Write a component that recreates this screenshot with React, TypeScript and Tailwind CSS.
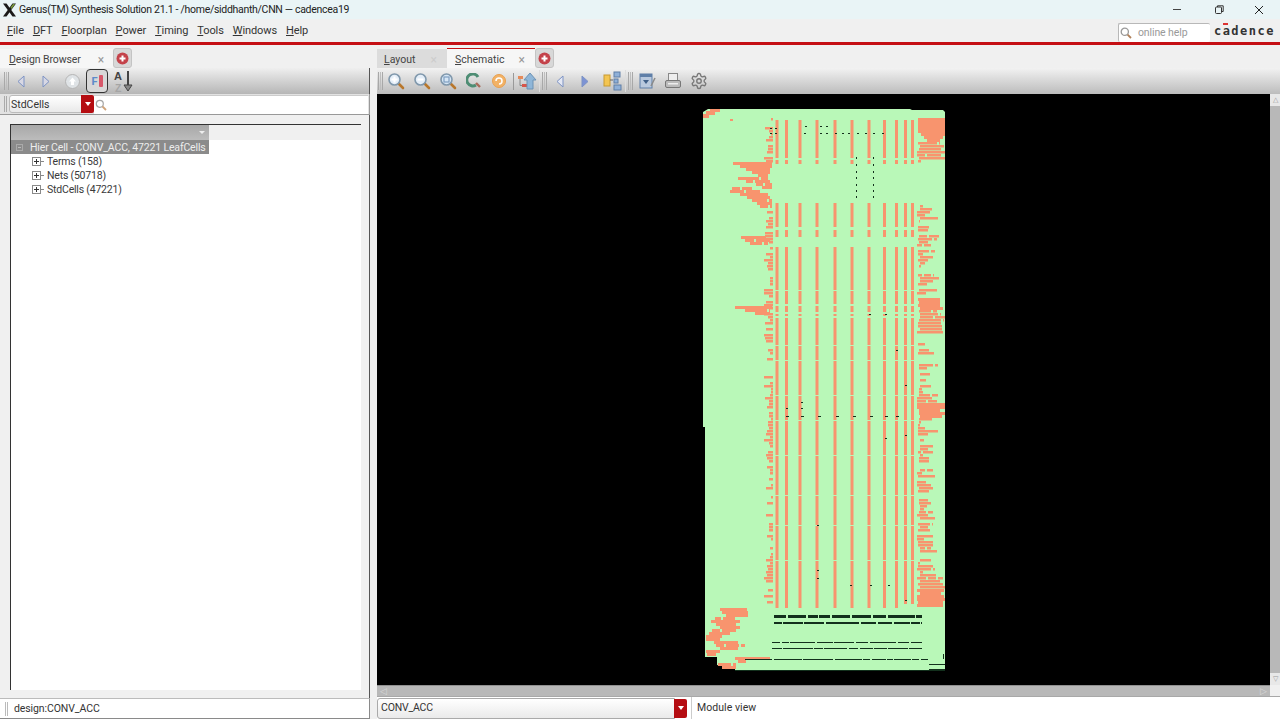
import React from "react";

function rng(seed: number) {
  let s = seed;
  return () => {
    s = (s * 1664525 + 1013904223) % 4294967296;
    return s / 4294967296;
  };
}

const STRIPES: [number, number][] = [
  [775.5, 3], [785, 3], [798.5, 3], [815.5, 3], [833.5, 3], [850.5, 3], [867.5, 3], [883, 3], [895, 3], [904, 3], [911, 3],
];
const SEGMENTS: [number, number][] = [
  [120, 158], [160, 164], [203, 227], [230, 237], [247, 290], [291, 304], [306, 312], [314, 316], [318, 345], [346, 360], [361, 395], [396, 420], [421, 455], [456, 495], [496, 525], [526, 560], [561, 608],
];
const ROW_LEFT: [number, number, number][] = [
  [162, 733, 772], [165, 740, 772], [168, 746, 770], [171, 752, 770], [174, 758, 768],
  [177, 738, 768], [180, 746, 770], [183, 756, 772], [186, 762, 772],
  [187, 732, 752], [190, 730, 760], [193, 740, 768], [196, 747, 772], [199, 752, 772], [202, 757, 772], [205, 760, 772],
  [236, 741, 766], [239, 745, 770], [242, 750, 768],
  [306, 735, 772], [309, 745, 770], [312, 755, 770],
  [608, 720, 747], [611, 722, 748], [614, 726, 748], [617, 715, 735], [620, 711, 740], [623, 716, 738], [626, 720, 740], [629, 712, 736],
  [632, 709, 730], [635, 706, 722], [638, 706, 720], [641, 714, 738], [644, 716, 745], [647, 720, 738], [650, 706, 720], [653, 707, 718], [657, 735, 770], [660, 738, 746], [663, 718, 736], [666, 722, 736],
];

function buildChip() {
  const r = rng(71);
  const salmon: string[] = [];
  const dark: string[] = [];
  const rect = (x: number, y: number, w: number, h: number) => `M${x} ${y}h${w}v${h}h${-w}z`;
  STRIPES.forEach(([x, w], i) => {
    SEGMENTS.forEach(([a, b]) => {
      if (i >= 9 && b > 600) salmon.push(rect(x, a, w, 604 - a));
      else salmon.push(rect(x, a, w, b - a));
    });
  });
  ROW_LEFT.forEach(([y, a, b]) => {
    let x = a;
    while (x < b) {
      const w = 5 + Math.floor(r() * 12);
      salmon.push(rect(x, y, Math.min(w, b - x), 3));
      x += w + (r() < 0.25 ? 2 : 0);
    }
  });
  for (let y = 118; y < 606; y += 3) {
    if (y > 160 && y < 203) continue;
    if (r() < 0.66) {
      const start = 764 + Math.floor(r() * 8);
      salmon.push(rect(start, y, 773 - start, 2.5));
    }
    const solid = y < 141;
    const block = (y > 295 && y < 310) || (y > 400 && y < 418) || (y > 588 && y < 607);
    const dense = y < 160 || block || (y > 310 && y < 333) || (y > 575 && y < 607);
    if (dense || r() < 0.74) {
      const end = dense ? 945 - Math.floor(r() * (y < 135 ? 1 : 6)) : 920 + Math.floor(r() * 20);
      let x = solid ? 918 + Math.max(0, y - 130) : 917 + Math.floor(r() * 4);
      while (x < end) {
        const w = dense ? 8 + Math.floor(r() * 12) : 3 + Math.floor(r() * 12);
        salmon.push(rect(x, y, Math.min(w, end - x), solid || block ? 3 : 2.5));
        x += w + (solid || block ? 0 : r() < 0.4 ? 2 : 0);
      }
    }
  }
  salmon.push(rect(703, 114, 6, 4), rect(706, 111, 9, 4), rect(710, 109, 10, 3), rect(730, 119, 3, 2));
  ([[615, 3, 774, 922], [622, 2, 774, 922], [642, 1, 772, 922], [648, 1, 772, 922], [659, 1, 745, 928]] as number[][]).forEach(([y, h, s, end]) => {
    let x = s;
    while (x < end) {
      const w = 6 + Math.floor(r() * 28);
      dark.push(rect(x, y, Math.min(w, end - x), h));
      x += w + 1 + Math.floor(r() * 2);
    }
  });
  dark.push(rect(929, 664, 16, 1), rect(929, 669, 16, 1), rect(735, 670, 210, 1), rect(943, 654, 1, 5));
  [[128, 770], [128, 775], [133, 770], [133, 775], [126, 805], [126, 820], [126, 826], [133, 804], [133, 820], [133, 826], [133, 835], [133, 842], [133, 848], [133, 857], [133, 865], [133, 873], [133, 882]].forEach(([y, x]) =>
    dark.push(rect(x, y, 2, 1)),
  );
  [157, 164, 171, 177, 184, 190, 196].forEach((y) => {
    dark.push(rect(856, y, 1, 2), rect(873, y, 1, 2));
  });
  [786, 801, 818, 836, 853, 870, 885, 896].forEach((x) => dark.push(rect(x, 416, 3, 1)));
  [[801, 402], [801, 408], [786, 408], [869, 314], [885, 314], [896, 350], [905, 385], [905, 435], [885, 438], [817, 525], [817, 570], [817, 578], [850, 585], [870, 585], [888, 585], [905, 600]].forEach(([x, y]) =>
    dark.push(rect(x, y, 2, 1)),
  );
  return { salmon: salmon.join(""), dark: dark.join("") };
}

const chip = buildChip();

function Chip() {
  return (
    <svg viewBox="377 94 893 591" className="block w-full h-full blur-[0.4px]">
      <path d="M703 112 L708 109 H910 L912 110 H943 L945 112 V671 H735 V668 L717 665 V657 H705 V427 H703 Z" fill="#b9f8b8" />
      <path d={chip.salmon} fill="#f8946e" />
      <path d={chip.dark} fill="#12301c" />
    </svg>
  );
}

const font = "font-['Roboto',sans-serif]";

function Grip() {
  return (
    <div className="flex gap-[1px] h-[18px] shrink-0">
      <span className="w-[1px] bg-[#a8a8a8]" />
      <span className="w-[1px] bg-[#bdbdbd]" />
      <span className="w-[1px] bg-[#a8a8a8]" />
    </div>
  );
}

function Mag({ kind }: { kind: "plus" | "minus" | "fit" }) {
  return (
    <svg width="18" height="18" viewBox="0 0 18 18" className="shrink-0">
      <line x1="11" y1="11" x2="16" y2="16" stroke="#b8772c" strokeWidth="2.6" strokeLinecap="round" />
      <circle cx="7.5" cy="7.5" r="5.5" fill={kind === "fit" ? "#d6e6f5" : "#e4eef8"} stroke="#8098ac" strokeWidth="1.6" />
      {kind !== "fit" && <rect x="4.5" y="6.5" width="6" height="2" fill="#fff" />}
      {kind === "plus" && <rect x="6.5" y="4.5" width="2" height="6" fill="#fff" />}
      {kind === "fit" && <rect x="5" y="5" width="5" height="5" fill="none" stroke="#7f9fc0" strokeWidth="1.2" />}
    </svg>
  );
}

function Tri({ dir, color, size = 10 }: { dir: "l" | "r"; color: string; size?: number }) {
  return (
    <svg width={size} height={size + 3} viewBox="0 0 10 13" className="shrink-0">
      <path d={dir === "l" ? "M8 1 L2 6.5 L8 12 Z" : "M2 1 L8 6.5 L2 12 Z"} fill={color} stroke="#7d93c4" strokeWidth="1" />
    </svg>
  );
}

function PlusBox() {
  return (
    <svg width="9" height="9" viewBox="0 0 9 9" className="shrink-0">
      <rect x="0.5" y="0.5" width="8" height="8" fill="#fff" stroke="#8a8a8a" />
      <path d="M2 4.5H7M4.5 2V7" stroke="#333" />
    </svg>
  );
}

function AddTab() {
  return (
    <div className="w-[19px] h-[20px] rounded-[3px] bg-[#d8d8d8] border border-[#c4c4c4] flex items-center justify-center mb-[1px]">
      <svg width="13" height="13" viewBox="0 0 13 13">
        <circle cx="6.5" cy="6.5" r="6" fill="#c4424a" />
        <path d="M3.5 6.5H9.5M6.5 3.5V9.5" stroke="#fff" strokeWidth="2" />
      </svg>
    </div>
  );
}

function RedDrop({ h }: { h: string }) {
  return (
    <div className={`w-[13px] ${h} bg-[#b50d12] rounded-r-[2px] flex items-center justify-center shrink-0`}>
      <span className="w-0 h-0 border-l-[3px] border-r-[3px] border-t-[4px] border-l-transparent border-r-transparent border-t-white" />
    </div>
  );
}

function TreeItem({ label }: { label: string }) {
  return (
    <div className="flex items-center h-[14px] pl-[21px] gap-[4px] text-[10.5px] tracking-[-0.2px] text-[#3a3a3a] leading-none">
      <div className="flex items-center">
        <PlusBox />
        <span className="w-[2px] border-t border-dotted border-[#888]" />
      </div>
      <span className="pt-[2px]">{label}</span>
    </div>
  );
}

const U = ({ children }: { children: string }) => <span className="underline">{children}</span>;

export default function App() {
  return (
    <div className={`w-[1280px] h-[719px] overflow-hidden flex flex-col bg-[#f0f0f0] text-[#333] ${font}`}>
      {/* Title bar */}
      <div className="h-[19px] bg-[#e9f4f6] flex items-center shrink-0">
        <svg width="15" height="14" viewBox="0 0 15 14" className="ml-[2px] mr-[2px]">
          <path d="M1 0.5 H4.5 L14 13.5 H10.5 Z" fill="#1a1a1a" />
          <path d="M14 0.5 H10.5 L1 13.5 H4.5 Z" fill="#1a1a1a" />
          <path d="M13 1 L11 1 L8.5 4.5 L9.5 6 Z" fill="#7b9a3a" />
        </svg>
        <span className="text-[10.5px] tracking-[-0.3px] pt-[1px] text-[#222] whitespace-nowrap">Genus(TM) Synthesis Solution 21.1 - /home/siddhanth/CNN — cadencea19</span>
        <div className="ml-auto flex items-center text-[#222]">
          <span className="w-[8px] h-[1px] bg-[#444] mr-[34px]" />
          <svg width="9" height="9" viewBox="0 0 9 9" className="mr-[30px]">
            <rect x="0.5" y="2" width="6" height="6.5" rx="1" fill="none" stroke="#333" />
            <path d="M2.5 2 V0.8 H8.2 V6.5 H6.5" fill="none" stroke="#333" />
          </svg>
          <svg width="10" height="10" viewBox="0 0 10 10" className="mr-[16px]">
            <path d="M1 1 L9 9 M9 1 L1 9" stroke="#222" strokeWidth="1" />
          </svg>
        </div>
      </div>
      {/* Menu bar */}
      <div className="h-[23px] flex items-center shrink-0 pl-[7px] text-[11px] tracking-[-0.1px] text-[#333]">
        <div className="flex gap-[9px] pt-[2px]">
          <span><U>F</U>ile</span>
          <span><U>D</U>FT</span>
          <span><U>F</U>loorplan</span>
          <span><U>P</U>ower</span>
          <span><U>T</U>iming</span>
          <span><U>T</U>ools</span>
          <span><U>W</U>indows</span>
          <span><U>H</U>elp</span>
        </div>
        <div className="ml-auto flex items-center h-full">
          <div className="w-[92px] h-[19px] mt-[3px] bg-white border-t border-l border-[#b8b8b8] rounded-[2px] flex items-center pl-[1px]">
            <svg width="12" height="12" viewBox="0 0 12 12" className="mr-[6px]">
              <circle cx="4.8" cy="4.8" r="3.6" fill="none" stroke="#9a9a9a" strokeWidth="1.3" />
              <line x1="7.6" y1="7.6" x2="11" y2="11" stroke="#b0805a" strokeWidth="1.8" />
            </svg>
            <span className="text-[10.5px] text-[#9a9a9a]">online help</span>
          </div>
          <span className="ml-[4px] mr-[5px] text-[12px] font-bold text-[#333] tracking-[1.5px] font-['DejaVu_Sans_Mono',monospace] relative">
            cadence
            <span className="absolute left-[9px] top-[1px] w-[5px] h-[2px] bg-[#d33]" />
          </span>
        </div>
      </div>
      <div className="h-[3px] bg-[#c50f14] shrink-0" />
      {/* Body */}
      <div className="flex-1 flex min-h-0">
        {/* Left pane */}
        <div className="w-[373px] shrink-0 flex flex-col pt-[3px] border-r-[3px] border-[#f0f0f0]">
          <div className="h-[21px] flex items-end shrink-0">
            <div className="w-[113px] h-[20px] bg-[#f6f6f6] flex items-center pl-[9px] pt-[1px] text-[10.5px] tracking-[-0.1px] text-[#444]">
              <span><U>D</U>esign Browser</span>
              <span className="ml-auto mr-[9px] text-[#999] text-[12px] leading-none">×</span>
            </div>
            <AddTab />
          </div>
          <div className="w-[370px] h-[26px] mt-[-1px] border-r border-[#555] bg-gradient-to-b from-[#efefef] to-[#b6b6b6] flex items-center pl-[4px] shrink-0">
            <Grip />
            <div className="ml-[7px] w-[8px]"><Tri dir="l" color="#d8d8e4" /></div>
            <div className="ml-[17px] w-[8px]"><Tri dir="r" color="#d8d8e4" /></div>
            <svg width="15" height="15" viewBox="0 0 15 15" className="ml-[16px]">
              <circle cx="7.5" cy="7.5" r="7" fill="#dfe3e6" stroke="#b5b5b5" />
              <path d="M7.5 3.5 L11 7.5 H9 V11 H6 V7.5 H4 Z" fill="#fff" />
            </svg>
            <div className="ml-[6px] w-[22px] h-[24px] border border-[#333] rounded-[4px] bg-[#d8d8d8] flex items-center justify-center gap-[1px]">
              <span className="text-[11px] font-bold text-[#5d8bc9] leading-none">F</span>
              <span className="w-[4px] h-[12px] bg-[#d8586a] rounded-[1px]" />
            </div>
            <svg width="22" height="23" viewBox="0 0 22 23" className="ml-[5px]">
              <path d="M15 1 V18" stroke="#333" strokeWidth="1.8" />
              <path d="M11 15 L15 21 L19 15 Z" fill="#888" stroke="#444" />
              <text x="1" y="10" fontSize="11" fontWeight="700" fill="#444" fontFamily="Liberation Sans">A</text>
              <text x="2" y="22" fontSize="10.5" fontWeight="700" fill="#a5a5a5" fontFamily="Liberation Sans">Z</text>
            </svg>
          </div>
          <div className="w-[370px] h-[21px] border-r border-[#999] border-b bg-[#e2e2e2] flex items-center pl-[4px] shrink-0">
            <div className="flex w-[5px] gap-[1px] h-[16px]">
              <span className="w-[1px] bg-[#aaa]" />
              <span className="w-[1px] bg-[#aaa]" />
            </div>
            <div className="w-[74px] h-[18px] bg-gradient-to-b from-[#fff] to-[#e9e9e9] border border-[#bbb] rounded-l-[3px] flex items-center text-[10.5px] pt-[1px] text-[#333] pl-[1px] mr-[-2px]">
              StdCells
            </div>
            <RedDrop h="h-[18px]" />
            <div className="flex-1 h-[19px] bg-white border-t border-[#ccc] flex items-center mr-[1px]">
              <svg width="12" height="12" viewBox="0 0 12 12" className="ml-[1px]">
                <circle cx="4.8" cy="4.8" r="3.5" fill="#fff" stroke="#a5a5a5" strokeWidth="1.2" />
                <line x1="7.5" y1="7.5" x2="11" y2="11" stroke="#d0a47a" strokeWidth="1.8" />
              </svg>
            </div>
          </div>
          <div className="w-[370px] flex-1 min-h-0 border-r border-[#555] bg-[#f0f0f0] pt-[9px] pl-[10px] pr-[8px] pb-[8px]">
            <div className="h-full border-l border-t border-[#333] bg-white flex flex-col">
              <div className="h-[15px] bg-[#f0f0f0] shrink-0">
                <div className="w-[198px] h-full bg-gradient-to-b from-[#a8a8a8] to-[#bcbcbc] flex items-center justify-end pr-[4px]">
                  <span className="w-0 h-0 border-l-[3px] border-r-[3px] border-t-[3px] border-l-transparent border-r-transparent border-t-[#eee]" />
                </div>
              </div>
              <div className="w-[198px] h-[14px] bg-[#8b8b8b] flex items-center shrink-0 pl-[5px] text-[10.5px] tracking-[-0.15px] text-[#ededed] whitespace-nowrap leading-none">
                <span className="w-[7px] h-[7px] border border-[#aaa] flex items-center justify-center mr-[7px] shrink-0">
                  <span className="w-[3px] h-[1px] bg-[#bbb]" />
                </span>
                <span className="pt-[2px]">Hier Cell - CONV_ACC, 47221 LeafCells</span>
              </div>
              <TreeItem label="Terms (158)" />
              <TreeItem label="Nets (50718)" />
              <TreeItem label="StdCells (47221)" />
            </div>
          </div>
          <div className="w-[370px] h-[21px] border-t border-r border-b border-[#8a8a8a] border-t-[#bbb] bg-white flex items-center pl-[14px] pt-[1px] text-[10.5px] tracking-[-0.1px] text-[#333] shrink-0 relative">
            <span className="absolute left-[5px] top-[3px] w-[3px] h-[14px] border-x border-[#bbb]" />
            design:CONV_ACC
          </div>
        </div>
        {/* Right pane */}
        <div className="flex-1 min-w-0 flex flex-col pt-[3px] pl-[4px]">
          <div className="h-[21px] flex items-end shrink-0">
            <div className="w-[70px] h-[20px] bg-[#dcdcdc] flex items-center pl-[7px] pt-[1px] text-[10.5px] text-[#444]">
              <span><U>L</U>ayout</span>
              <span className="ml-auto mr-[10px] text-[#ccc] text-[12px] leading-none">×</span>
            </div>
            <div className="w-[88px] h-[21px] bg-[#f6f6f6] border-t border-[#c50f14] flex items-center pl-[8px] pt-[1px] text-[10.5px] text-[#444]">
              <span><U>S</U>chematic</span>
              <span className="ml-auto mr-[10px] text-[#999] text-[12px] leading-none">×</span>
            </div>
            <AddTab />
          </div>
          <div className="h-[26px] mt-[-1px] bg-gradient-to-b from-[#f2f2f2] to-[#bcbcbc] flex items-center pl-[1px] shrink-0">
            <Grip />
            <div className="ml-[4px] flex items-center gap-[8px]">
              <Mag kind="plus" />
              <Mag kind="minus" />
              <Mag kind="fit" />
            </div>
            <svg width="16" height="16" viewBox="0 0 16 16" className="ml-[9px]">
              <path d="M12 4 A6 6 0 1 0 10 12" fill="none" stroke="#4e8d74" strokeWidth="3" />
              <line x1="10" y1="10" x2="14" y2="14" stroke="#a86a5a" strokeWidth="2.4" />
            </svg>
            <svg width="16" height="16" viewBox="0 0 16 16" className="ml-[9px]">
              <circle cx="8" cy="8" r="6.5" fill="#f2b266" stroke="#e8a050" />
              <path d="M5 8 A3 3 0 1 1 8 11" fill="none" stroke="#fff" strokeWidth="1.5" />
            </svg>
            <span className="w-[1px] h-[17px] bg-[#999] ml-[6px]" />
            <svg width="20" height="20" viewBox="0 0 20 20" className="ml-[3px]">
              <rect x="1" y="5" width="5" height="3" fill="#e58a5a" />
              <rect x="5" y="13" width="5" height="3" fill="#d8554a" />
              <path d="M3 8 V14.5 H5" fill="none" stroke="#888" />
              <path d="M13 2 L19 9 H16 V18 H10 V9 H7 Z" fill="#8fb6d8" stroke="#6d93b5" />
            </svg>
            <span className="w-[1px] h-[22px] bg-[#ddd] ml-[2px]" />
            <div className="ml-[2px]"><Grip /></div>
            <div className="ml-[8px]"><Tri dir="l" color="#e4e8f4" /></div>
            <div className="ml-[15px]"><Tri dir="r" color="#7d93d4" /></div>
            <svg width="20" height="20" viewBox="0 0 20 20" className="ml-[13px]">
              <rect x="1" y="4" width="6" height="11" fill="#f3c552" stroke="#c79a33" />
              <rect x="11" y="1" width="6" height="5" fill="#8fb0d8" stroke="#5f7fa8" />
              <rect x="11" y="8" width="4" height="4" fill="#8fb0d8" stroke="#5f7fa8" />
              <rect x="11" y="14" width="7" height="5" fill="#8fb0d8" stroke="#5f7fa8" />
              <path d="M7 9 H10" stroke="#666" />
            </svg>
            <span className="w-[1px] h-[22px] bg-[#ddd] ml-[2px]" />
            <div className="ml-[2px]"><Grip /></div>
            <svg width="18" height="18" viewBox="0 0 18 18" className="ml-[6px]">
              <rect x="1" y="2" width="12" height="14" fill="#b9c9de" stroke="#5f7fa8" />
              <rect x="1" y="2" width="12" height="3" fill="#5f7fa8" />
              <path d="M4 8 L7 12 L10 8 Z" fill="#3f5f88" />
              <path d="M12 14 L16 6" stroke="#8a8a8a" strokeWidth="1.6" />
            </svg>
            <svg width="18" height="18" viewBox="0 0 18 18" className="ml-[7px]">
              <rect x="4.5" y="1.5" width="9" height="7" fill="#eee" stroke="#888" />
              <rect x="1.5" y="8.5" width="15" height="7" rx="1.5" fill="#bbb" stroke="#777" />
              <rect x="4" y="11" width="10" height="1.5" fill="#eee" />
            </svg>
            <svg width="18" height="18" viewBox="0 0 24 24" className="ml-[8px]" fill="none" stroke="#777" strokeWidth="1.8">
              <path d="M12.22 2h-.44a2 2 0 0 0-2 2v.18a2 2 0 0 1-1 1.73l-.43.25a2 2 0 0 1-2 0l-.15-.08a2 2 0 0 0-2.73.73l-.22.38a2 2 0 0 0 .73 2.73l.15.1a2 2 0 0 1 1 1.72v.51a2 2 0 0 1-1 1.74l-.15.09a2 2 0 0 0-.73 2.73l.22.38a2 2 0 0 0 2.73.73l.15-.08a2 2 0 0 1 2 0l.43.25a2 2 0 0 1 1 1.73V20a2 2 0 0 0 2 2h.44a2 2 0 0 0 2-2v-.18a2 2 0 0 1 1-1.73l.43-.25a2 2 0 0 1 2 0l.15.08a2 2 0 0 0 2.73-.73l.22-.39a2 2 0 0 0-.73-2.73l-.15-.08a2 2 0 0 1-1-1.74v-.5a2 2 0 0 1 1-1.74l.15-.09a2 2 0 0 0 .73-2.73l-.22-.38a2 2 0 0 0-2.73-.73l-.15.08a2 2 0 0 1-2 0l-.43-.25a2 2 0 0 1-1-1.73V4a2 2 0 0 0-2-2z" />
              <circle cx="12" cy="12" r="3" />
            </svg>
          </div>
          <div className="flex-1 min-h-0 flex">
            <div className="flex-1 min-w-0 flex flex-col">
              <div className="flex-1 min-h-0 bg-black overflow-hidden">
                <Chip />
              </div>
              <div className="h-[11px] bg-[#b8b8b8] border-t border-[#909090] flex items-center shrink-0">
                <span className="text-[9px] text-[#d8d8d8] leading-none pl-[3px]">◁</span>
                <span className="text-[9px] text-[#d8d8d8] leading-none ml-auto pr-[3px]">▷</span>
              </div>
            </div>
            <div className="w-[10px] flex flex-col bg-[#b8b8b8] shrink-0">
              <div className="h-[12px] bg-[#e8e8e8] flex items-center justify-center text-[7px] text-[#999] leading-none">△</div>
              <div className="flex-1" />
              <div className="h-[12px] bg-[#e8e8e8] flex items-center justify-center text-[7px] text-[#999] leading-none">▽</div>
              <div className="h-[11px] bg-[#f0f0f0]" />
            </div>
          </div>
          <div className="h-[23px] border-t border-[#a8a8a8] bg-white flex items-center shrink-0">
            <div className="w-[298px] h-[21px] border border-[#aaa] bg-gradient-to-b from-[#fff] to-[#eaeaea] rounded-l-[3px] flex items-center pl-[3px] text-[10.5px] tracking-[-0.2px] text-[#333] mr-[-1px]">
              CONV_ACC
            </div>
            <RedDrop h="h-[19px]" />
            <div className="ml-[4px] h-full border-l border-[#ccc] pl-[5px] flex items-center text-[10.5px] tracking-[0.05px] text-[#333]">Module view</div>
          </div>
        </div>
      </div>
    </div>
  );
}
